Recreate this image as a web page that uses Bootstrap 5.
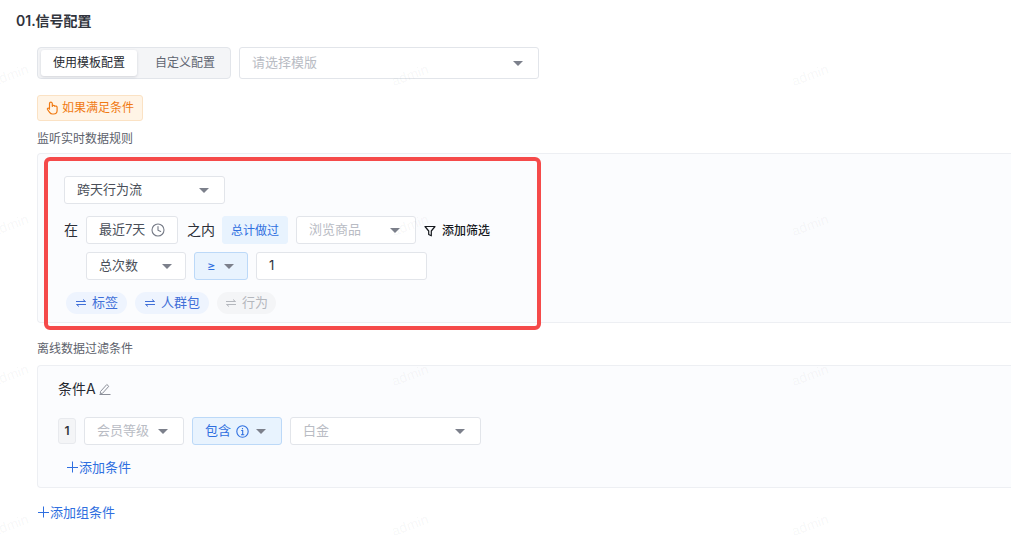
<!DOCTYPE html>
<html lang="zh-CN">
<head>
    <meta charset="UTF-8">
    <meta name="viewport" content="width=device-width, initial-scale=1">
    <title>信号配置</title>
    <link rel="stylesheet" href="https://cdn.jsdelivr.net/npm/bootstrap@5.3.0/dist/css/bootstrap.min.css">
    <style>
        html, body { height: 540px; overflow: hidden; }
        body {
            position: relative;
            font-family: "Inter", "Noto Sans CJK SC", sans-serif;
            font-size: 13px;
            color: #2b2f38;
            background: #fff;
        }
        .page-title { font-size: 14px; font-weight: 600; line-height: 20px; margin: 11px 0 0 16px; color: #30343c; }
        .sect { margin-left: 37px; }

        .seg-wrap { width: 194px; height: 32px; padding: 2px 0 2px 3px; background: #f4f5f7; border: 1px solid #e2e5ea; border-radius: 4px; }
        .seg-btn { flex: 0 0 96px; height: 26px; line-height: 26px; font-size: 12px; text-align: center; color: #5f6571; }
        .seg-btn.on { flex-basis: 96px; background: #fff; color: #262a31; border-radius: 3px; box-shadow: 0 1px 3px rgba(30, 40, 60, .16); }
        .seg-btn.rest { flex-basis: 90px; padding-left: 6px; white-space: nowrap; }

        .pick {
            height: 28px;
            padding: 0 12px;
            background: #fff;
            border: 1px solid #e2e5ea;
            border-radius: 3px;
            color: #4a4f59;
            white-space: nowrap;
        }
        .pick.tall { height: 32px; }
        .pick.hint { color: #b9bcc4; }
        .pick.blue { background: #e8f3fe; border-color: #bcd9f8; color: #2f6fe0; }
        .pick.flatblue { width: 66px; padding: 1px 0 0; background: #e8f3fe; border-color: #e8f3fe; color: #2f6fe0; font-size: 12px; }
        .caret { width: 0; height: 0; margin-right: 3px; border-left: 5px solid transparent; border-right: 5px solid transparent; border-top: 5.5px solid #7c808b; }

        .w-tpl { width: 300px; }
        .w-flow { width: 161px; }
        .w-time { width: 92px; }
        .w-goods { width: 120px; }
        .w-count { width: 100px; }
        .w-cmp { width: 54px; }
        .w-val { width: 171px; }
        .w-level { width: 100px; }
        .w-has { width: 90px; }
        .w-plat { width: 191px; }

        .cond-tag {
            width: 106px;
            height: 26px;
            margin-top: 16px;
            padding-left: 8px;
            background: #fff4e6;
            border: 1px solid #fbe2c4;
            border-radius: 3px;
            color: #f07a13;
            font-size: 12px;
            gap: 3px;
        }
        .sub-label { font-size: 12px; line-height: 16px; color: #5c616b; }
        .panel {
            position: relative;
            background: #fbfcfe;
            border: 1px solid #edeff3;
            border-right: 0;
            border-radius: 4px 0 0 4px;
        }
        .panel-a { height: 170px; margin-top: 6px; padding: 22px 0 0 26px; }
        .panel-b { height: 123px; margin-top: 8px; padding: 13px 0 0 20px; }
        .red-box {
            position: absolute;
            left: 6px;
            top: 3px;
            width: 497px;
            height: 173px;
            border: 4px solid #f54a4a;
            border-radius: 6px;
            pointer-events: none;
        }
        .word { font-size: 14px; line-height: 20px; color: #2b2f38; padding-bottom: 1px; white-space: nowrap; }
        .add-filter { padding-top: 1px; font-size: 12px; color: #15181d; font-weight: 500; }
        .chip { height: 22px; padding: 0 9px 0 10px; border-radius: 11px; background: #eef4fe; color: #3f6fd8; }
        .chip.off { background: #f4f5f7; color: #b4b7bd; padding: 0 8px 0 9px; }
        .cond-name { font-size: 14px; line-height: 20px; color: #262a31; }
        .num-box { width: 18px; height: 26px; background: #f4f5f7; border: 1px solid #e8eaee; border-radius: 3px; font-size: 12px; font-weight: 600; color: #30343c; }
        .add-link { color: #2f6fe0; line-height: 18px; gap: 1px; }
        .mark-layer { position: absolute; inset: 0; overflow: hidden; pointer-events: none; }
        .mark-text {
            position: absolute;
            width: 40px;
            text-align: center;
            font-family: "Liberation Sans", sans-serif;
            font-size: 14px;
            line-height: 16px;
            color: rgba(60, 70, 90, .05);
            transform: rotate(-20deg);
        }
    </style>
</head>
<body>
    <div class="page-title">01.信号配置</div>

    <div class="sect">
        <div class="d-flex gap-2" style="margin-top:16px">
            <div class="seg-wrap d-flex">
                <div class="seg-btn on">使用模板配置</div>
                <div class="seg-btn rest">自定义配置</div>
            </div>
            <div class="pick tall hint w-tpl d-flex align-items-center justify-content-between">
                <span>请选择模版</span><span class="caret"></span>
            </div>
        </div>

        <div class="cond-tag d-flex align-items-center">
            <svg width="13" height="14" viewBox="0 0 13 14" fill="none" stroke="#f07a13" stroke-width="1.2" stroke-linejoin="round" stroke-linecap="round">
                <path d="M3.500 7V2.600a1.400 1.400 0 0 1 2.800 0V5.400M6.300 5c.5-1 2.400-.9 2.600.3c.8-.6 2.200-.2 2.200 1V9.500c0 2-1.500 3.500-3.500 3.500H6.500c-1.300 0-2.200-.7-2.900-1.700L1.500 8.500c-.6-1 .8-1.900 1.500-1l.5.7"/>
            </svg>
            <span>如果满足条件</span>
        </div>

        <div class="sub-label" style="margin-top:10px">监听实时数据规则</div>
        <div class="panel panel-a">
            <div class="pick w-flow d-flex align-items-center justify-content-between">
                <span>跨天行为流</span><span class="caret"></span>
            </div>
            <div class="d-flex align-items-center gap-2" style="margin-top:12px">
                <span class="word" style="width:14px">在</span>
                <div class="pick w-time d-flex align-items-center justify-content-between" style="margin-right:1px">
                    <span>最近7天</span>
                    <svg width="14" height="14" viewBox="0 0 14 14" fill="none" stroke="#767b87" stroke-width="1.100" stroke-linecap="round" stroke-linejoin="round">
                        <circle cx="7" cy="7" r="6"/><path d="M7 3.600V7.300L9.700 8.400"/>
                    </svg>
                </div>
                <span class="word" style="width:27px">之内</span>
                <div class="pick flatblue d-flex align-items-center justify-content-center">总计做过</div>
                <div class="pick hint w-goods d-flex align-items-center justify-content-between">
                    <span>浏览商品</span><span class="caret"></span>
                </div>
                <div class="add-filter d-flex align-items-center" style="gap:6px">
                    <svg width="12" height="12" viewBox="0 0 12 12" fill="none" stroke="#15181d" stroke-width="1.200" stroke-linejoin="round">
                        <path d="M1 1.500H11L7.300 6V10.800L4.700 9.500V6Z"/>
                    </svg>
                    <span>添加筛选</span>
                </div>
            </div>
            <div class="d-flex gap-2" style="margin:8px 0 0 22px">
                <div class="pick w-count d-flex align-items-center justify-content-between">
                    <span>总次数</span><span class="caret" style="margin-right:1px"></span>
                </div>
                <div class="pick blue w-cmp d-flex align-items-center gap-2" style="padding-right:0">
                    <span>≥</span><span class="caret"></span>
                </div>
                <div class="pick w-val d-flex align-items-center" style="color:#30343c">1</div>
            </div>
            <div class="d-flex gap-2" style="margin:12px 0 0 2px">
                <div class="chip d-flex align-items-center" style="gap:6px">
                    <svg width="10" height="8" viewBox="0 0 10 8" fill="none" stroke="#3f6fd8" stroke-width="1"><path d="M0 2.500H9.500L7 .5M10 5.500H.5L3 7.500"/></svg>
                    <span>标签</span>
                </div>
                <div class="chip d-flex align-items-center" style="gap:6px">
                    <svg width="10" height="8" viewBox="0 0 10 8" fill="none" stroke="#3f6fd8" stroke-width="1"><path d="M0 2.500H9.500L7 .5M10 5.500H.5L3 7.500"/></svg>
                    <span>人群包</span>
                </div>
                <div class="chip off d-flex align-items-center" style="gap:6px">
                    <svg width="10" height="8" viewBox="0 0 10 8" fill="none" stroke="#b4b7bd" stroke-width="1"><path d="M0 2.500H9.500L7 .5M10 5.500H.5L3 7.500"/></svg>
                    <span>行为</span>
                </div>
            </div>
            <div class="red-box"></div>
        </div>

        <div class="sub-label" style="margin-top:18px">离线数据过滤条件</div>
        <div class="panel panel-b">
            <div class="cond-name d-flex align-items-center" style="gap:3px">
                <span>条件A</span>
                <svg width="12" height="12" viewBox="0 0 12 12" fill="none" stroke="#8b8f99" stroke-width="1" stroke-linejoin="round">
                    <path d="M1.500 8.500L7.800 1.500L9.800 3.300L3.500 10.300L1.300 10.500Z"/><path d="M.5 11.500H11.500"/>
                </svg>
            </div>
            <div class="d-flex gap-2" style="margin-top:18px">
                <div class="num-box d-flex align-items-center justify-content-center align-self-center">1</div>
                <div class="pick hint w-level d-flex align-items-center justify-content-between">
                    <span>会员等级</span><span class="caret"></span>
                </div>
                <div class="pick blue w-has d-flex align-items-center" style="gap:5px">
                    <span>包含</span>
                    <svg width="13" height="13" viewBox="0 0 13 13" fill="none" stroke="#2f6fe0" stroke-width="1.100">
                        <circle cx="6.500" cy="6.500" r="5.700"/><path d="M5.200 5.500H6.700V9.700M5 9.700H8.300M6.500 3V4.200"/>
                    </svg>
                    <span class="caret" style="margin-left:2px"></span>
                </div>
                <div class="pick hint w-plat d-flex align-items-center justify-content-between">
                    <span>白金</span><span class="caret"></span>
                </div>
            </div>
            <div class="add-link d-flex align-items-center" style="margin:13px 0 0 9px">
                <svg width="11" height="12" viewBox="0 0 11 12" stroke="#2f6fe0" stroke-width="1"><path d="M5.500 .5V11.500M0 6.500H11"/></svg>
                <span>添加条件</span>
            </div>
        </div>
        <div class="add-link d-flex align-items-center" style="margin:15px 0 0 1px">
            <svg width="11" height="12" viewBox="0 0 11 12" stroke="#2f6fe0" stroke-width="1"><path d="M5.500 .5V11.500M0 6.500H11"/></svg>
            <span>添加组条件</span>
        </div>
    </div>

    <div class="mark-layer" id="marks"></div>

    <script>
        // watermark repeats every 400x150
        let marks = document.getElementById("marks");
        [75, 225, 375, 525].forEach(y => {
            [-10, 390, 790].forEach(x => {
                let s = document.createElement("span");
                s.className = "mark-text";
                s.textContent = "admin";
                s.style.left = x + "px";
                s.style.top = (y - 8) + "px";
                marks.appendChild(s);
            });
        });
    </script>
</body>
</html>
